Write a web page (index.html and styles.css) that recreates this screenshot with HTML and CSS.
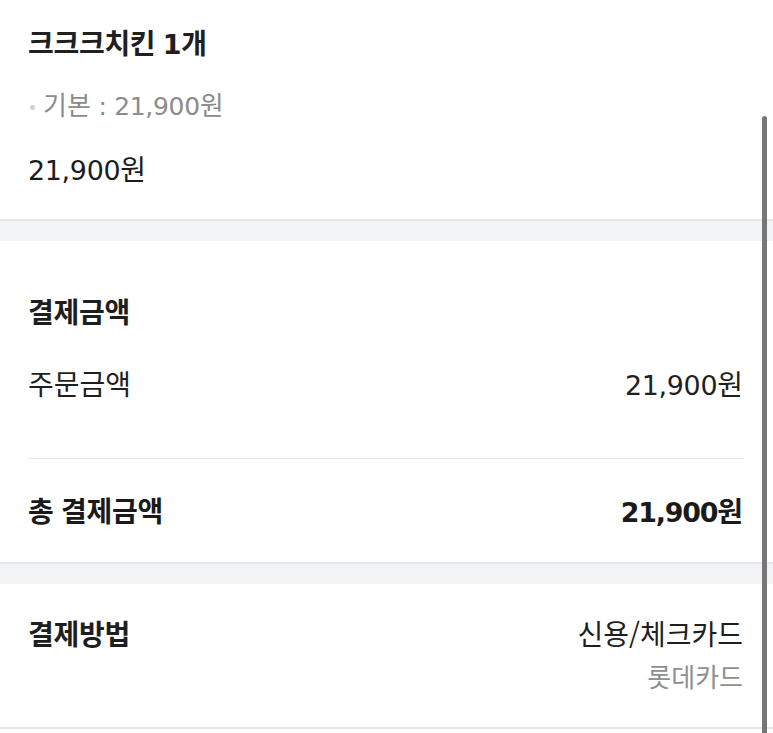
FILE: index.html
```html
<!DOCTYPE html>
<html lang="ko">
<head>
<meta charset="utf-8">
<title>주문 상세</title>
<link rel="stylesheet" href="styles.css">
</head>
<body>
<main class="page">
  <section class="section menu">
    <h2 class="menu-title">크크크치킨 <span class="num">1</span>개</h2>
    <p class="menu-option"><span class="dot"></span>기본<span class="num"> : 21,900</span>원</p>
    <p class="menu-price"><span class="num">21,900</span>원</p>
  </section>

  <section class="section pay">
    <h3 class="heading">결제금액</h3>
    <div class="row first">
      <span class="label">주문금액</span>
      <span class="value"><span class="num">21,900</span>원</span>
    </div>
    <hr class="divider">
    <div class="row total">
      <span class="label">총 결제금액</span>
      <span class="value"><span class="num">21,900</span>원</span>
    </div>
  </section>

  <section class="section method">
    <div class="method-row">
      <h3 class="heading">결제방법</h3>
      <div class="method-info">
        <span class="method-type">신용/체크카드</span>
        <span class="method-card">롯데카드</span>
      </div>
    </div>
  </section>
</main>
<div class="scrollbar"></div>
</body>
</html>
```

FILE: styles.css
```css
* { box-sizing: border-box; }
html, body {
  margin: 0;
  padding: 0;
  background: #ffffff;
}
body {
  font-family: "Noto Sans CJK KR", "Noto Sans", sans-serif;
  font-size: 28px;
  color: #1f1f1f;
  overflow: hidden;
}
.page {
  display: flex;
  flex-direction: column;
  gap: 20px;
  background: #f2f3f5;
}
.section {
  background: #ffffff;
  padding: 0 30px 0 28px;
}
.menu {
  padding-top: 24px;
  padding-bottom: 33px;
  border-bottom: 2px solid #e6e7ea;
}
.menu-title {
  margin: 0;
  height: 36px;
  font-size: 28px;
  line-height: 36px;
  font-weight: 700;
  color: #202020;
  letter-spacing: -0.3px;
}
.menu-option {
  margin: 27px 0 0;
  height: 34px;
  font-size: 26px;
  line-height: 34px;
  color: #8c8c8c;
  white-space: pre;
}
.dot {
  display: inline-block;
  width: 5px;
  height: 5px;
  border-radius: 50%;
  background: #cfcfcf;
  margin: 0 8px 0 2px;
  vertical-align: middle;
}
.menu-price {
  margin: 29px 0 0;
  height: 36px;
  font-size: 28px;
  line-height: 36px;
  color: #1c1c1c;
}
.num {
  font-family: "DejaVu Sans", "Noto Sans CJK KR", sans-serif;
  font-size: 0.96em;
  letter-spacing: -0.3px;
  line-height: 1;
}
.pay {
  padding-top: 52px;
  padding-bottom: 34px;
  border-bottom: 2px solid #e6e7ea;
}
.heading {
  margin: 0;
  height: 36px;
  font-size: 28px;
  line-height: 36px;
  font-weight: 700;
  color: #1e1e1e;
  letter-spacing: -0.3px;
}
.row {
  display: flex;
  justify-content: space-between;
  align-items: center;
  height: 36px;
  font-size: 28px;
  line-height: 36px;
}
.row.first {
  margin-top: 36px;
  color: #1f1f1f;
}
.divider {
  margin: 57px 0 0;
  border: 0;
  border-top: 1px solid #e6e6e6;
  height: 0;
}
.row.total {
  margin-top: 33px;
  font-weight: 700;
  color: #1a1a1a;
}
.row.total .label { letter-spacing: -0.3px; }
.row.total .num {
  font-weight: 700;
  letter-spacing: -1.2px;
}
.method {
  padding-top: 31px;
  padding-bottom: 36px;
  border-bottom: 2px solid #e6e7ea;
}
.method-row {
  display: flex;
  justify-content: space-between;
  align-items: flex-start;
}
.method-info {
  display: flex;
  flex-direction: column;
  align-items: flex-end;
}
.method-type {
  height: 36px;
  font-size: 28px;
  line-height: 36px;
  color: #1f1f1f;
}
.method-card {
  margin-top: 10px;
  height: 30px;
  font-size: 26px;
  line-height: 30px;
  color: #8f8f8f;
}
.scrollbar {
  position: fixed;
  left: 762px;
  top: 116px;
  width: 5px;
  height: 640px;
  border-radius: 3px;
  background: #767676;
}
```
